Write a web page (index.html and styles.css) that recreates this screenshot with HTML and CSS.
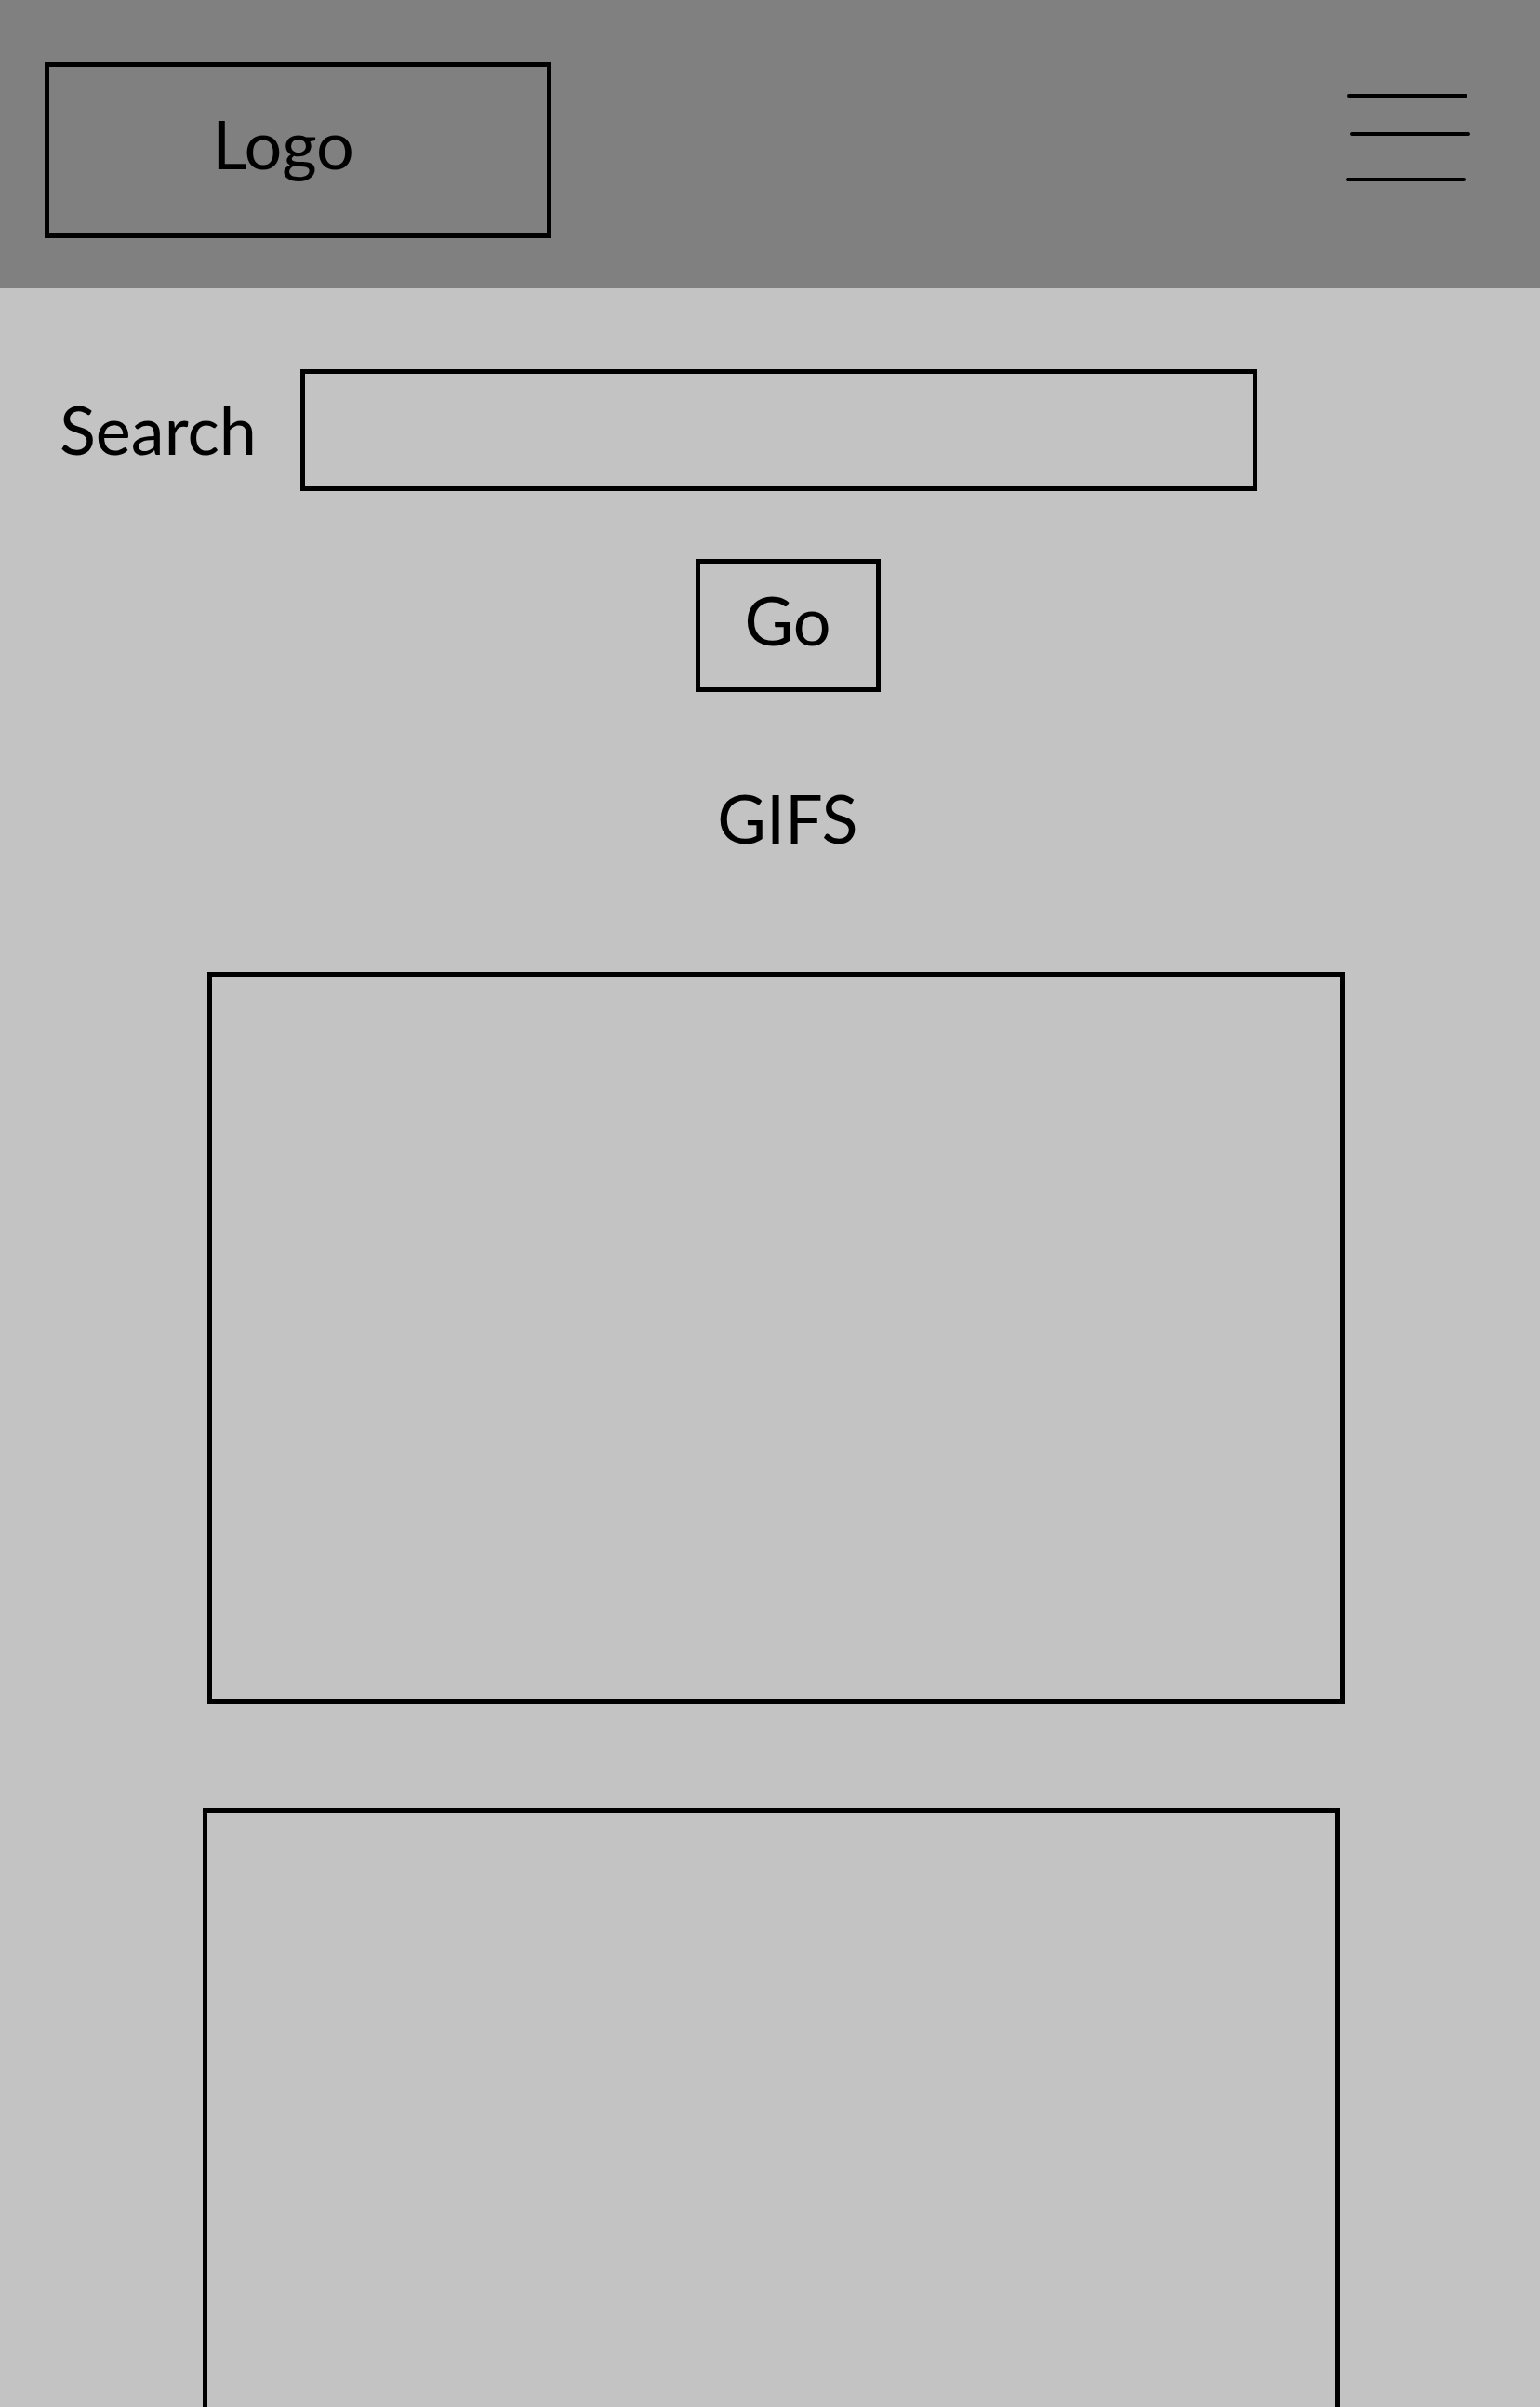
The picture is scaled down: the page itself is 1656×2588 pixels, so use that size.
FILE: index.html
```html
<!DOCTYPE html>
<html lang="en">
<head>
  <meta charset="UTF-8" />
  <title>GIF Search</title>
  <link rel="stylesheet" href="styles.css">
</head>
<body>
  <header class="topbar">
    <div class="logo">Logo</div>
    <button class="menu-btn" aria-label="Menu">
      <svg width="150" height="110" viewBox="0 0 150 110">
        <line x1="11" y1="8" x2="136" y2="8" />
        <line x1="14" y1="49" x2="139" y2="49" />
        <line x1="9" y1="98" x2="134" y2="98" />
      </svg>
    </button>
  </header>

  <main class="content">
    <form class="search-row" onsubmit="return false">
      <label for="query" class="search-label">Search</label>
      <input id="query" class="search-input" type="text" />
    </form>

    <div class="center-col">
      <button class="go-btn">Go</button>
      <h2 class="section-title">GIFS</h2>
    </div>

    <div class="gallery">
      <div class="gif-card"></div>
      <div class="gif-card"></div>
    </div>
  </main>
</body>
</html>
```

FILE: styles.css
```css
html, body {
  height: 100%;
}

body {
  margin: 0;
  padding: 0;
  overflow: hidden;
  font-family: Lato, "Open Sans", sans-serif;
  background: #c3c3c3;
  color: #000;
}

.topbar {
  display: flex;
  justify-content: space-between;
  align-items: flex-start;
  height: 310px;
  padding: 67px 66px 0 48px;
  box-sizing: border-box;
  background: #808080;
}

.logo {
  display: flex;
  align-items: center;
  justify-content: center;
  width: 545px;
  height: 189px;
  padding: 0 32px 15px 0;
  box-sizing: border-box;
  border: 5px solid #000;
  font-size: 72px;
}

.menu-btn {
  margin-top: 28px;
  padding: 0;
  border: none;
  background: none;
  cursor: pointer;
}

.menu-btn svg {
  display: block;
}

.menu-btn line {
  stroke: #000;
  stroke-width: 4;
  stroke-linecap: round;
}

.search-row {
  display: flex;
  align-items: center;
  margin: 87px 0 0;
  padding-left: 64px;
}

.search-label {
  width: 259px;
  font-size: 72px;
  padding-bottom: 4px;
}

.search-input {
  width: 1029px;
  height: 131px;
  box-sizing: border-box;
  border: 5px solid #000;
  background: transparent;
  font-size: 48px;
  font-family: inherit;
  padding: 0 20px;
  outline: none;
}

.center-col {
  display: flex;
  flex-direction: column;
  align-items: center;
  padding-left: 38px;
}

.go-btn {
  display: flex;
  align-items: center;
  justify-content: center;
  width: 199px;
  height: 143px;
  margin-top: 73px;
  padding: 0 0 14px;
  box-sizing: border-box;
  border: 5px solid #000;
  background: transparent;
  font-family: inherit;
  font-size: 72px;
  color: #000;
  cursor: pointer;
}

.section-title {
  margin: 99px 0 0;
  font-size: 72px;
  font-weight: normal;
  line-height: 72px;
}

.gallery {
  display: flex;
  flex-direction: column;
  align-items: flex-start;
  gap: 112px;
  margin-top: 130px;
  padding-left: 218px;
}

.gif-card {
  width: 1223px;
  height: 787px;
  box-sizing: border-box;
  border: 5px solid #000;
  flex-shrink: 0;
}

.gif-card:first-child {
  margin-left: 5px;
}
```
